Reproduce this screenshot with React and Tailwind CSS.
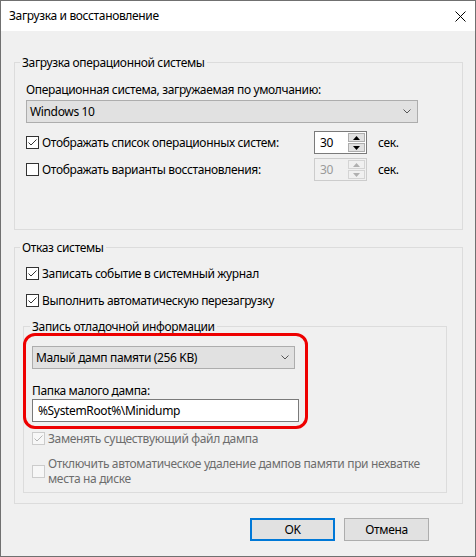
import React from "react";

const FONT = { fontFamily: '"Noto Sans", "Open Sans", sans-serif' };

function Check({ checked, disabled }) {
  return (
    <span
      className={
        "w-[13px] h-[13px] shrink-0 border flex items-center justify-center " +
        (disabled ? "border-[#cccccc] bg-[#f7f7f7]" : "border-[#333333] bg-white")
      }
    >
      {checked && (
        <svg width="11" height="11" viewBox="0 0 11 11">
          <polyline
            points="1.5,5.5 4,8 9.5,2.5"
            fill="none"
            stroke={disabled ? "#b5b5b5" : "#333333"}
            strokeWidth="1"
          />
        </svg>
      )}
    </span>
  );
}

function Chevron() {
  return (
    <svg width="8" height="5" viewBox="0 0 8 5">
      <polyline points="0.5,0.5 4,4 7.5,0.5" fill="none" stroke="#555555" strokeWidth="1" />
    </svg>
  );
}

function Arrow({ up, disabled }) {
  return (
    <svg width="7" height="4" viewBox="0 0 7 4">
      <polygon
        points={up ? "0,4 3.5,0 7,4" : "0,0 3.5,4 7,0"}
        fill={disabled ? "#b0b0b0" : "#000000"}
      />
    </svg>
  );
}

function Spinner({ disabled }) {
  return (
    <div
      className={
        "w-[53px] h-[23px] flex border " +
        (disabled ? "border-[#cccccc] bg-[#f0f0f0]" : "border-[#7a7a7a] bg-white")
      }
    >
      <div
        className={
          "flex-1 pl-[5px] flex items-center text-[12px] " +
          (disabled ? "text-[#9a9a9a]" : "text-black")
        }
      >
        30
      </div>
      <div className="w-[18px] flex flex-col gap-[1px] py-[1px] pr-[1px]">
        <div
          className={
            "flex-1 border flex items-center justify-center " +
            (disabled ? "border-[#d4d4d4] bg-[#f0f0f0]" : "border-[#adadad] bg-[#e1e1e1]")
          }
        >
          <Arrow up disabled={disabled} />
        </div>
        <div
          className={
            "flex-1 border flex items-center justify-center " +
            (disabled ? "border-[#d4d4d4] bg-[#f0f0f0]" : "border-[#adadad] bg-[#e1e1e1]")
          }
        >
          <Arrow disabled={disabled} />
        </div>
      </div>
    </div>
  );
}

export default function App() {
  return (
    <div
      className="w-[476px] h-[557px] border border-[#707070] bg-[#f0f0f0] flex flex-col text-[12px] tracking-[-0.35px] text-black"
      style={FONT}
    >
      {/* title bar */}
      <div className="h-[30px] bg-white flex items-center justify-between pl-[8px] pr-[9px]">
        <span className="text-[12px] leading-[16px]">Загрузка и восстановление</span>
        <svg width="11" height="11" viewBox="0 0 11 11">
          <path d="M0.5 0.5 L10.5 10.5 M10.5 0.5 L0.5 10.5" stroke="#000" strokeWidth="1" />
        </svg>
      </div>

      {/* body */}
      <div className="flex-1 pl-[13px] pr-[12px] pt-[24px] flex flex-col">
        {/* group 1 */}
        <fieldset className="border border-[#dcdcdc] pb-[48px]">
          <legend className="ml-[5px] px-[2px] leading-[15px]">Загрузка операционной системы</legend>
          <div className="pl-[11px] mt-[12px] h-[16px] leading-[16px]">
            Операционная система, загружаемая по умолчанию:
          </div>
          <div className="ml-[11px] mt-[2px] w-[392px] h-[23px] border border-[#adadad] bg-[#e1e1e1] flex items-center justify-between pl-[3px] pr-[6px]">
            <span>Windows 10</span>
            <Chevron />
          </div>
          <div className="pl-[11px] mt-[8px] h-[23px] flex items-center">
            <div className="w-[288px] flex items-center gap-[3px]">
              <Check checked />
              <span>Отображать список операционных систем:</span>
            </div>
            <Spinner />
            <span className="ml-[11px]">сек.</span>
          </div>
          <div className="pl-[11px] mt-[4px] h-[23px] flex items-center">
            <div className="w-[288px] flex items-center gap-[3px]">
              <Check />
              <span>Отображать варианты восстановления:</span>
            </div>
            <Spinner disabled />
            <span className="ml-[11px]">сек.</span>
          </div>
        </fieldset>

        {/* group 2 */}
        <fieldset className="mt-[10px] border border-[#dcdcdc] pb-[10px]">
          <legend className="ml-[5px] px-[2px] leading-[15px]">Отказ системы</legend>
          <div className="pl-[11px] mt-[10px] h-[17px] flex items-center gap-[3px]">
            <Check checked />
            <span>Записать событие в системный журнал</span>
          </div>
          <div className="pl-[11px] mt-[10px] h-[17px] flex items-center gap-[3px]">
            <Check checked />
            <span>Выполнить автоматическую перезагрузку</span>
          </div>

          {/* inner group */}
          <fieldset className="relative ml-[8px] mr-[15px] mt-[10px] border border-[#dcdcdc] pb-[6px]">
            <legend className="ml-[6px] px-[2px] leading-[15px]">Запись отладочной информации</legend>
            <div className="ml-[8px] mt-[12px] w-[263px] h-[23px] border border-[#adadad] bg-[#e1e1e1] flex items-center justify-between pl-[3px] pr-[5px]">
              <span>Малый дамп памяти (256 KB)</span>
              <Chevron />
            </div>
            <div className="pl-[8px] mt-[14px] h-[15px] leading-[15px]">Папка малого дампа:</div>
            <div className="ml-[8px] mt-[1px] w-[267px] h-[23px] border border-[#7a7a7a] bg-white flex items-center pl-[5px]">
              %SystemRoot%\Minidump
            </div>
            <div className="pl-[8px] mt-[8px] h-[17px] flex items-center gap-[3px] text-[#6d6d6d]">
              <Check checked disabled />
              <span>Заменять существующий файл дампа</span>
            </div>
            <div className="pl-[8px] mt-[9px] h-[30px] flex items-center gap-[3px] text-[#6d6d6d]">
              <Check disabled />
              <span className="leading-[15px] w-[390px]">
                Отключить автоматическое удаление дампов памяти при нехватке места на диске
              </span>
            </div>
            <div className="absolute left-[-1px] top-[-1px] w-[285px] h-[96px] border-[3px] border-[#ee0000] rounded-[12px] pointer-events-none" />
          </fieldset>
        </fieldset>

        {/* buttons */}
        <div className="mt-[14px] flex justify-end gap-[9px] pr-[34px]">
          <button className="w-[85px] h-[23px] border-2 border-[#0078d7] bg-[#e1e1e1] flex items-center justify-center">
            OK
          </button>
          <button className="w-[85px] h-[23px] border border-[#adadad] bg-[#e1e1e1] flex items-center justify-center">
            Отмена
          </button>
        </div>
      </div>
    </div>
  );
}
